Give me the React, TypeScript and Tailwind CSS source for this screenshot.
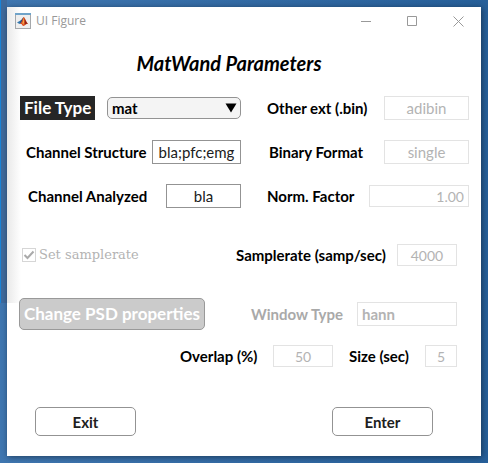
import React from "react";

const labelText = "text-[15px] leading-5 font-bold whitespace-nowrap";
const fieldBase = "min-w-0 border bg-white px-1 leading-5";
const disabledField = "border-[#e3e3e3] text-[#b3b3b3]";
const activeField = "border-[#939393] text-[#202020]";

type FieldProps = {
  id: string;
  label: string;
  value: string;
  className: string;
  disabled?: boolean;
  labelClass?: string;
};

function Field({ id, label, value, className, disabled, labelClass = "text-black" }: FieldProps) {
  return (
    <div className="flex items-center justify-between gap-1">
      <label htmlFor={id} className={`${labelText} ${labelClass}`}>
        {label}
      </label>
      <input
        id={id}
        type="text"
        defaultValue={value}
        disabled={disabled}
        className={`${fieldBase} ${disabled ? disabledField : activeField} ${className}`}
      />
    </div>
  );
}

function AppIcon() {
  return (
    <svg width="16" height="16" viewBox="0 0 16 16" aria-hidden="true">
      <rect x="0.5" y="0.5" width="15" height="15" fill="#eeeeee" stroke="#a5a8ab" />
      <path d="M0 0H16V2H0Z" fill="#6fa3c9" />
      <path d="M2 9.5L5.5 7.5L7 9L4.5 11Z" fill="#3477ad" />
      <path d="M5.5 7.5C6.5 7 7.5 5 8.5 4L8 8L5 11Z" fill="#254d78" />
      <path d="M8.5 4C10.2 4.5 11 9 13.5 11.5C12 10.5 11 11.5 9.5 12.5C8.5 13.5 7.5 13 6.5 11L5 11C7 9.5 7.2 6 8.5 4Z" fill="#d64b20" />
      <path d="M8.7 4.8C9.4 7 9.4 9.5 8.3 12L7.3 10C8.3 8 8.3 6.5 8.7 4.8Z" fill="#f7a94b" />
      <path d="M9.6 5.5C10.6 7.5 11.4 9.6 12.8 11C11.4 10.4 10.8 10.6 10 11.2Z" fill="#8f2318" />
    </svg>
  );
}

function TitleBar() {
  return (
    <header className="flex h-7 items-center justify-between pr-[17px] pl-2 text-[#999999]">
      <div className="flex items-center gap-[5px]">
        <AppIcon />
        <span className="font-['Open_Sans','Noto_Sans',sans-serif] text-xs leading-4">UI Figure</span>
      </div>
      <div className="flex items-center gap-[35px]">
        <button type="button" aria-label="Minimize">
          <svg width="11" height="11" viewBox="0 0 11 11" stroke="currentColor" fill="none">
            <path d="M0 5.5H10" />
          </svg>
        </button>
        <button type="button" aria-label="Maximize">
          <svg width="11" height="11" viewBox="0 0 11 11" stroke="currentColor" fill="none">
            <path d="M0.5 0.5H9.5V9.5H0.5Z" />
          </svg>
        </button>
        <button type="button" aria-label="Close">
          <svg width="11" height="11" viewBox="0 0 11 11" stroke="currentColor" fill="none">
            <path d="M0.5 0.5L10.5 10.5M10.5 0.5L0.5 10.5" />
          </svg>
        </button>
      </div>
    </header>
  );
}

const pair = "grid grid-cols-[221fr_202fr] items-center gap-[26px] pr-3 pl-[13px]";
const actionButton =
  "h-[29px] w-[101px] rounded-[5px] border border-[#939393] bg-white text-[15px] leading-5 font-bold text-[#202020]";

export default function App() {
  return (
    <div className="relative min-h-screen bg-linear-to-r from-[#3f76b0] to-[#265f99] p-[7px] font-['Lato',sans-serif]">
      <div className="absolute top-0 left-0 h-[303px] w-[7px] border-l border-[#1883d7] bg-[#3f6a9c]" />
      <main className="relative flex flex-col bg-white pb-5 shadow-[1px_1px_6px_rgba(0,0,0,0.45)]">
        <div className="absolute top-0 left-0 h-[296px] w-[14px] bg-linear-to-r from-[#e9e9e9] to-white" />
        <div className="relative">
          <TitleBar />
          <h1 className="mt-4 pr-[30px] text-center text-xl leading-6 font-bold text-black italic">
            MatWand Parameters
          </h1>

          <form className="mt-[21px]">
            <div className={pair}>
              <div className="flex items-center justify-between">
                <label
                  htmlFor="file-type"
                  className="bg-[#262626] px-1 py-0.5 text-[17px] leading-5 font-bold whitespace-nowrap text-white"
                >
                  File Type
                </label>
                <div className="relative flex items-center">
                  <select
                    id="file-type"
                    defaultValue="mat"
                    className="h-[22px] w-[134px] appearance-none rounded-[5px] border border-[#939393] bg-[#f4f4f4] px-1 text-[15px] leading-5 font-bold text-black"
                  >
                    <option>mat</option>
                  </select>
                  <svg
                    className="pointer-events-none absolute right-1"
                    width="12"
                    height="10"
                    viewBox="0 0 12 10"
                    aria-hidden="true"
                  >
                    <path d="M0.5 0.5H11.5L6 9.5Z" />
                  </svg>
                </div>
              </div>
              <Field id="ext" label="Other ext (.bin)" value="adibin" disabled className="h-6 w-[85px] text-center text-[15px]" />
            </div>

            <div className={`${pair} mt-5`}>
              <Field id="structure" label="Channel Structure" value="bla;pfc;emg" labelClass="pl-1.5 text-black" className="h-6 w-[89px] text-center text-[15px]" />
              <Field id="format" label="Binary Format" value="single" disabled labelClass="pl-0.5 text-black" className="h-6 w-[85px] text-center text-[15px]" />
            </div>

            <div className={`${pair} mt-5`}>
              <Field id="analyzed" label="Channel Analyzed" value="bla" labelClass="pl-2 text-black" className="h-6 w-[75px] text-center text-[15px]" />
              <Field id="norm" label="Norm. Factor" value="1.00" disabled className="h-[22px] w-[100px] text-right text-sm" />
            </div>

            <div className="mt-9 flex items-center justify-between pr-6 pl-[15px]">
              <label className="flex items-center gap-[3px] font-['DejaVu_Serif',serif] text-[13px] leading-5 whitespace-nowrap text-[#b3b3b3]">
                <span className="relative flex">
                  <input
                    type="checkbox"
                    defaultChecked
                    disabled
                    className="h-[14px] w-[14px] appearance-none border border-[#d6d6d6] bg-white"
                  />
                  <svg className="pointer-events-none absolute inset-0" width="14" height="14" viewBox="0 0 14 14" aria-hidden="true">
                    <path d="M2.5 7L5.5 10L11.5 3.5" fill="none" stroke="#aaaaaa" strokeWidth="2" />
                  </svg>
                </span>
                Set samplerate
              </label>
              <div className="w-[221px]">
                <Field id="rate" label="Samplerate (samp/sec)" value="4000" disabled className="h-[22px] w-[60px] text-center text-sm" />
              </div>
            </div>

            <div className="mt-8 flex items-center justify-between pr-6 pl-3">
              <button
                type="button"
                disabled
                className="h-8 w-[186px] rounded-[5px] border border-[#999999] bg-[#cbcbcb] text-[17px] leading-5 font-bold whitespace-nowrap text-white"
              >
                Change PSD properties
              </button>
              <div className="w-[206px]">
                <Field id="window" label="Window Type" value="hann" disabled labelClass="text-[#a9a9a9]" className="h-6 w-[100px] text-[15px] font-bold" />
              </div>
            </div>

            <div className="mt-[15px] flex items-center justify-end gap-4 pr-6">
              <div className="w-[153px]">
                <Field id="overlap" label="Overlap (%)" value="50" disabled className="h-[22px] w-[60px] text-center text-sm" />
              </div>
              <div className="w-[108px]">
                <Field id="size" label="Size (sec)" value="5" disabled className="h-[22px] w-8 text-center text-sm" />
              </div>
            </div>

            <div className="mt-10 flex justify-between pr-12 pl-7">
              <button type="button" className={actionButton}>
                Exit
              </button>
              <button type="submit" className={actionButton}>
                Enter
              </button>
            </div>
          </form>
        </div>
      </main>
    </div>
  );
}
